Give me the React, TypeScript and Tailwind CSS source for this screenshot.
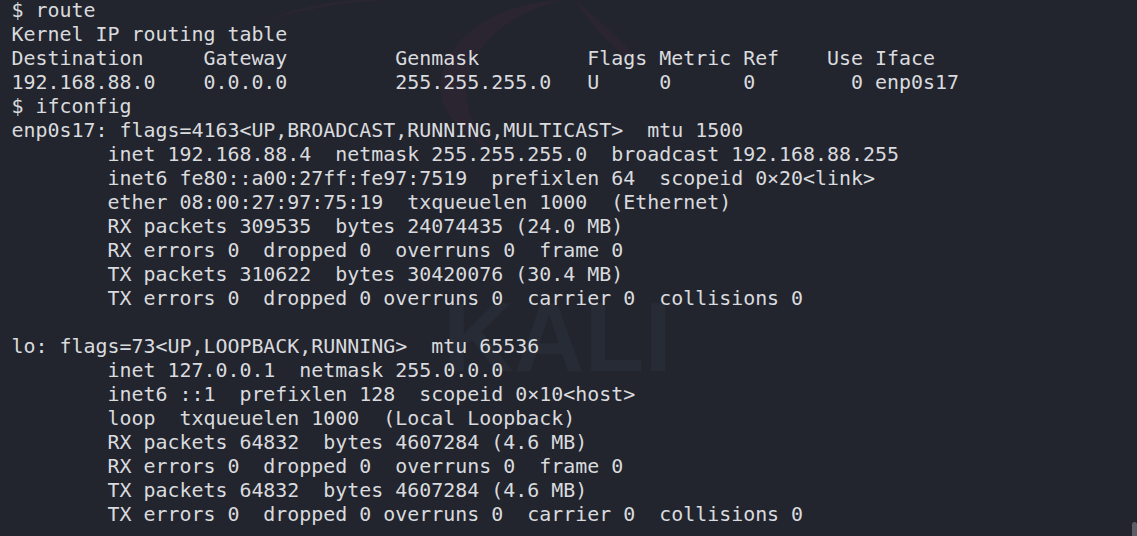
const LINES = [
  '$ route',
  'Kernel IP routing table',
  'Destination     Gateway         Genmask         Flags Metric Ref    Use Iface',
  '192.168.88.0    0.0.0.0         255.255.255.0   U     0      0        0 enp0s17',
  '$ ifconfig',
  'enp0s17: flags=4163<UP,BROADCAST,RUNNING,MULTICAST>  mtu 1500',
  '        inet 192.168.88.4  netmask 255.255.255.0  broadcast 192.168.88.255',
  '        inet6 fe80::a00:27ff:fe97:7519  prefixlen 64  scopeid 0×20<link>',
  '        ether 08:00:27:97:75:19  txqueuelen 1000  (Ethernet)',
  '        RX packets 309535  bytes 24074435 (24.0 MB)',
  '        RX errors 0  dropped 0  overruns 0  frame 0',
  '        TX packets 310622  bytes 30420076 (30.4 MB)',
  '        TX errors 0  dropped 0 overruns 0  carrier 0  collisions 0',
  '',
  'lo: flags=73<UP,LOOPBACK,RUNNING>  mtu 65536',
  '        inet 127.0.0.1  netmask 255.0.0.0',
  '        inet6 ::1  prefixlen 128  scopeid 0×10<host>',
  '        loop  txqueuelen 1000  (Local Loopback)',
  '        RX packets 64832  bytes 4607284 (4.6 MB)',
  '        RX errors 0  dropped 0  overruns 0  frame 0',
  '        TX packets 64832  bytes 4607284 (4.6 MB)',
  '        TX errors 0  dropped 0 overruns 0  carrier 0  collisions 0',
];

export default function App() {
  return (
    <div className="relative h-[536px] w-[1137px] overflow-hidden bg-[#23252e]">
      {/* faint wallpaper behind the terminal */}
      <svg className="absolute left-0 top-0" width="1137" height="536" viewBox="0 0 1137 536">
        <path d="M262 22C300 6 340 -2 385 0C340 3 300 10 262 22Z" fill="#2a2630" />
        <path d="M560 0C500 4 452 30 441 78C436 108 456 130 490 150C474 128 462 105 468 78C478 38 510 16 560 0Z" fill="#2a2531" />
        <path d="M575 0C600 20 625 45 648 68C620 58 600 36 575 0Z" fill="#2a2531" />
        <path d="M590 130C630 150 665 180 682 225C672 190 640 155 590 130Z" fill="#272a36" />
      </svg>
      <div className="absolute left-[443px] top-[288px] font-['Liberation_Sans',sans-serif] text-[98px] font-bold leading-none text-[#262b35]">
        KALI
      </div>

      <pre className="relative -mt-px pl-[11.5px] font-['DejaVu_Sans_Mono',monospace] text-[19.93px] leading-6 text-[#d9dbdf]">
        {LINES.map((line, i) => (
          <div key={i} className="h-6">
            {line}
          </div>
        ))}
      </pre>

      <div className="absolute bottom-0 right-0 h-3.5 w-[5px] rounded-t-sm bg-[#5c5d66]" />
    </div>
  );
}
